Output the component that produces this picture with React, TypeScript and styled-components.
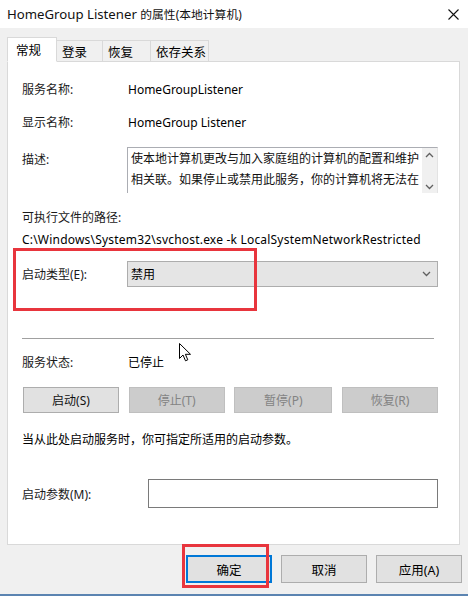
import React from 'react';
import styled, { createGlobalStyle } from 'styled-components';

const GlobalStyle = createGlobalStyle`
  html, body {
    margin: 0;
    padding: 0;
    background: #f0f0f0;
  }
  * {
    box-sizing: border-box;
  }
`;

const UI_FONT = `"Noto Sans", "Noto Sans CJK SC", sans-serif`;

const Window = styled.div`
  position: relative;
  width: 468px;
  height: 596px;
  display: flex;
  flex-direction: column;
  background: #f0f0f0;
  font-family: ${UI_FONT};
  font-size: 12px;
  color: #000;
  overflow: hidden;
  border-bottom: 2px solid #5b84b1;
`;

const TitleBar = styled.div`
  height: 28px;
  flex-shrink: 0;
  display: flex;
  align-items: center;
  justify-content: space-between;
  padding: 0 9px 0 7px;
  background: #fff;
`;

const Title = styled.div`
  font-size: 13.2px;
  color: #111;
`;

const TitleCjk = styled.span`
  font-size: 11.8px;
`;

const Body = styled.div`
  display: flex;
  flex-direction: column;
  padding: 9px 8px 0 7px;
`;

const TabStrip = styled.div`
  display: flex;
  align-items: flex-end;
  height: 25px;
  margin-bottom: -1px;
  position: relative;
  z-index: 1;
`;

const Tab = styled.div<{ $active?: boolean; $w: number }>`
  width: ${(p) => p.$w}px;
  height: ${(p) => (p.$active ? 25 : 22)}px;
  display: flex;
  align-items: center;
  padding-left: ${(p) => (p.$active ? 8 : 5)}px;
  background: ${(p) => (p.$active ? '#fff' : '#f0f0f0')};
  border: 1px solid #d9d9d9;
  border-bottom: ${(p) => (p.$active ? '1px solid #fff' : '1px solid #d9d9d9')};
  border-left: ${(p) => (p.$active ? '1px solid #d9d9d9' : 'none')};
  font-size: 12.5px;
`;

const Panel = styled.div`
  height: 484px;
  background: #fff;
  border: 1px solid #d9d9d9;
  padding: 17px 21px 0 14px;
  display: flex;
  flex-direction: column;
`;

const Row = styled.div<{ $top: number; $h: number; $start?: boolean }>`
  margin-top: ${(p) => p.$top}px;
  height: ${(p) => p.$h}px;
  display: flex;
  align-items: ${(p) => (p.$start ? 'flex-start' : 'center')};
  flex-shrink: 0;
`;

const Label = styled.div<{ $w?: number; $pad?: number }>`
  width: ${(p) => p.$w ?? 105}px;
  flex-shrink: 0;
  padding-top: ${(p) => p.$pad ?? 0}px;
  color: #1a1a1a;
`;

const Value = styled.div`
  flex: 1;
  padding-left: 1px;
`;

const PathText = styled.div`
  letter-spacing: 0.2px;
  white-space: nowrap;
`;

const DescBox = styled.div`
  flex: 1;
  height: 46px;
  display: flex;
  border: 1px solid #abadb3;
  border-right-color: #e3e3e3;
  border-bottom: none;
  padding: 0 0 0 3px;
`;

const DescText = styled.div`
  flex: 1;
  line-height: 21px;
  color: #111;
`;

const ScrollBar = styled.div`
  width: 15px;
  background: #f0f0f0;
  display: flex;
  flex-direction: column;
  justify-content: space-between;
  align-items: center;
  padding: 4px 0 3px;
`;

const Select = styled.div`
  flex: 1;
  height: 26px;
  display: flex;
  align-items: center;
  justify-content: space-between;
  padding: 0 6px 0 3px;
  background: #e5e5e5;
  border: 1px solid #adadad;
`;

const Separator = styled.div`
  margin: 51px 4px 0 0;
  height: 1px;
  background: #a0a0a0;
  flex-shrink: 0;
`;

const ButtonRow = styled.div`
  margin-top: 15px;
  display: flex;
  justify-content: space-between;
  padding-left: 1px;
`;

const Button = styled.div<{ $disabled?: boolean; $w: number }>`
  width: ${(p) => p.$w}px;
  height: 26px;
  display: flex;
  align-items: center;
  justify-content: center;
  background: ${(p) => (p.$disabled ? '#cccccc' : '#e1e1e1')};
  border: 1px solid ${(p) => (p.$disabled ? '#bfbfbf' : '#adadad')};
  color: ${(p) => (p.$disabled ? '#838383' : '#111')};
`;

const Hint = styled.div`
  margin-top: 16px;
  height: 20px;
  display: flex;
  align-items: center;
`;

const TextInput = styled.div`
  flex: 1;
  height: 29px;
  border: 1px solid #7a7a7a;
  background: #fff;
`;

const Footer = styled.div`
  display: flex;
  justify-content: flex-end;
  gap: 9px;
  padding: 10px 6px 0 0;
`;

const DialogButton = styled.div<{ $default?: boolean }>`
  width: 86px;
  height: 28px;
  display: flex;
  align-items: center;
  justify-content: center;
  background: #e1e1e1;
  border: ${(p) => (p.$default ? '2px solid #0078d7' : '1px solid #adadad')};
  font-size: 12.5px;
`;

// red call-out frames drawn over the dialog
const Highlight = styled.div<{ $x: number; $y: number; $w: number; $h: number }>`
  position: absolute;
  left: ${(p) => p.$x}px;
  top: ${(p) => p.$y}px;
  width: ${(p) => p.$w}px;
  height: ${(p) => p.$h}px;
  border: 3px solid #e8353d;
  pointer-events: none;
`;

const Cursor = styled.svg`
  position: absolute;
  left: 179px;
  top: 343px;
`;

const CloseIcon = () => (
  <svg width="11" height="11" viewBox="0 0 11 11">
    <path d="M0.5 0.5 L10.5 10.5 M10.5 0.5 L0.5 10.5" stroke="#111" strokeWidth="1.1" fill="none" />
  </svg>
);

const Chevron = ({ up }: { up?: boolean }) => (
  <svg width="9" height="6" viewBox="0 0 9 6">
    <path
      d={up ? 'M1 5 L4.5 1.5 L8 5' : 'M1 1 L4.5 4.5 L8 1'}
      stroke="#606060"
      strokeWidth="1.3"
      fill="none"
    />
  </svg>
);

const tabs = [
  { name: '常规', w: 50 },
  { name: '登录', w: 46 },
  { name: '恢复', w: 48 },
  { name: '依存关系', w: 58 },
];

const serviceButtons = [
  { label: '启动(S)', w: 96, disabled: false },
  { label: '停止(T)', w: 96, disabled: true },
  { label: '暂停(P)', w: 98, disabled: true },
  { label: '恢复(R)', w: 96, disabled: true },
];

export default function App() {
  return (
    <>
      <GlobalStyle />
      <Window>
        <TitleBar>
          <Title>
            HomeGroup Listener <TitleCjk>的属性(本地计算机)</TitleCjk>
          </Title>
          <CloseIcon />
        </TitleBar>
        <Body>
          <TabStrip>
            {tabs.map((t, i) => (
              <Tab key={t.name} $active={i === 0} $w={t.w}>
                {t.name}
              </Tab>
            ))}
          </TabStrip>
          <Panel>
            <Row $top={0} $h={20}>
              <Label>服务名称:</Label>
              <Value>HomeGroupListener</Value>
            </Row>
            <Row $top={13} $h={20}>
              <Label>显示名称:</Label>
              <Value>HomeGroup Listener</Value>
            </Row>
            <Row $top={15} $h={46} $start>
              <Label $pad={3}>描述:</Label>
              <DescBox>
                <DescText>
                  使本地计算机更改与加入家庭组的计算机的配置和维护
                  <br />
                  相关联。如果停止或禁用此服务，你的计算机将无法在
                </DescText>
                <ScrollBar>
                  <Chevron up />
                  <Chevron />
                </ScrollBar>
              </DescBox>
            </Row>
            <Row $top={14} $h={20}>
              <Label $w={200}>可执行文件的路径:</Label>
            </Row>
            <Row $top={2} $h={20}>
              <PathText>C:\Windows\System32\svchost.exe -k LocalSystemNetworkRestricted</PathText>
            </Row>
            <Row $top={12} $h={26}>
              <Label>启动类型(E):</Label>
              <Select>
                <span>禁用</span>
                <Chevron />
              </Select>
            </Row>
            <Separator />
            <Row $top={13} $h={20}>
              <Label>服务状态:</Label>
              <Value>已停止</Value>
            </Row>
            <ButtonRow>
              {serviceButtons.map((b) => (
                <Button key={b.label} $w={b.w} $disabled={b.disabled}>
                  {b.label}
                </Button>
              ))}
            </ButtonRow>
            <Hint>当从此处启动服务时，你可指定所适用的启动参数。</Hint>
            <Row $top={30} $h={29}>
              <Label $w={126}>启动参数(M):</Label>
              <TextInput />
            </Row>
          </Panel>
        </Body>
        <Footer>
          <DialogButton $default>确定</DialogButton>
          <DialogButton>取消</DialogButton>
          <DialogButton>应用(A)</DialogButton>
        </Footer>

        <Highlight $x={13} $y={248} $w={244} $h={63} />
        <Highlight $x={182} $y={544} $w={87} $h={44} />
        <Cursor width="13" height="19" viewBox="0 0 13 19">
          <path
            d="M0.5 0.5 L0.5 15.5 L4 12 L6.5 17.8 L8.8 16.8 L6.4 11.3 L11.5 11.3 Z"
            fill="#fff"
            stroke="#000"
            strokeWidth="1"
            strokeLinejoin="round"
          />
        </Cursor>
      </Window>
    </>
  );
}
